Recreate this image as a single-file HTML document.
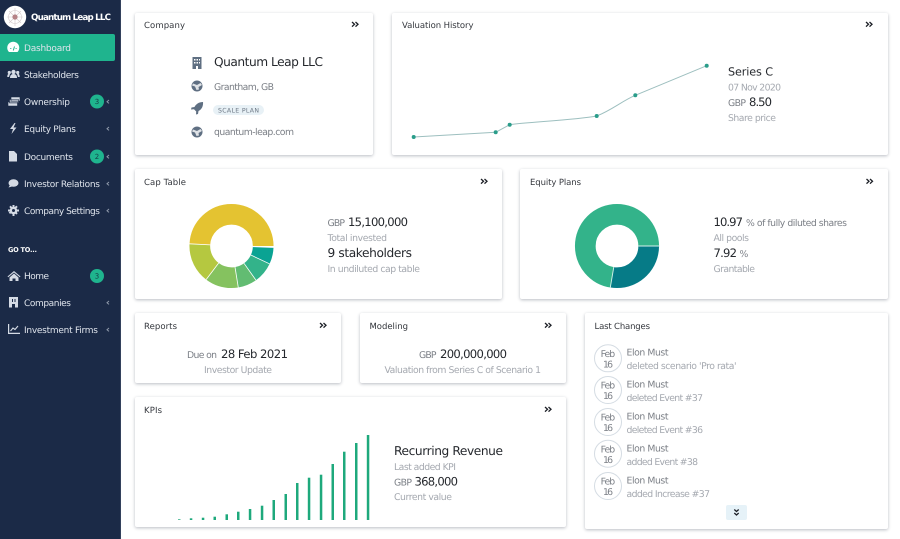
<!DOCTYPE html>
<html><head><meta charset="utf-8"><title>Dashboard</title>
<style>
html,body{margin:0;padding:0;width:900px;height:539px;overflow:hidden;background:#fff}
.side{position:absolute;left:0;top:0;width:120px;height:539px;background:#1b2a47;border-right:1px solid #33415c}
.act{position:absolute;left:0;top:34px;width:115px;height:27px;background:#1fb48e;border-radius:0 2px 2px 0}
.c{position:absolute;background:#fff;border-radius:2px;box-shadow:0 1px 3px rgba(40,50,70,.32)}
svg{position:absolute;left:0;top:0}
text{font-family:"DejaVu Sans","Liberation Sans",sans-serif;font-size:9.3px;fill:#7b7f86;text-rendering:geometricPrecision}
.s text{fill:#dfe4ec;font-size:9px}
.t{font-size:8.5px;fill:#33363c}
.l{fill:#a5a9b0}
.d{fill:#7b7f86}
.b{fill:#25282d;font-size:11.6px}
.big{font-size:12.2px;fill:#25282d}
.ic{fill:#5f6f82}
.si{fill:#d5dbe5}
.ch{fill:none;stroke:#dfe4ec;stroke-width:1}
.dc{fill:none;stroke:#1c1f26;stroke-width:1.3}
</style></head><body>
<div class="side"></div><div class="act"></div>
<div class="c" style="left:135px;top:13px;width:238px;height:142px"></div>
<div class="c" style="left:392px;top:13px;width:496px;height:142px"></div>
<div class="c" style="left:135px;top:169px;width:367px;height:130px"></div>
<div class="c" style="left:520px;top:169px;width:368px;height:130px"></div>
<div class="c" style="left:135px;top:313px;width:206px;height:70px"></div>
<div class="c" style="left:360px;top:313px;width:206px;height:70px"></div>
<div class="c" style="left:135px;top:397px;width:431px;height:130px"></div>
<div class="c" style="left:585px;top:313px;width:303px;height:216px"></div>

<svg width="900" height="539" viewBox="0 0 900 539">
<!-- logo -->
<circle cx="15" cy="17" r="11.2" fill="#fff"/>
<g stroke="#d3c9cb" stroke-width=".6" fill="none"><path d="M15 8v18M7 17h16M9 11l12 12M21 11L9 23"/><circle cx="15" cy="17" r="6.5"/></g>
<circle cx="15" cy="17" r="2.6" fill="#b58387"/>

<g class="s">
<text x="31" y="20" textLength="80" style="font-weight:bold;font-size:8.7px;fill:#fff">Quantum Leap LLC</text>
<text x="24" y="51" textLength="47">Dashboard</text>
<text x="24" y="78" textLength="55">Stakeholders</text>
<text x="24" y="105" textLength="46">Ownership</text>
<text x="24" y="132" textLength="52">Equity Plans</text>
<text x="24" y="160" textLength="49">Documents</text>
<text x="24" y="187" textLength="76">Investor Relations</text>
<text x="24" y="214" textLength="76">Company Settings</text>
<text x="8" y="252" textLength="29" style="font-weight:bold;font-size:6.6px;fill:#fff">GO TO...</text>
<text x="24" y="279" textLength="25">Home</text>
<text x="24" y="306" textLength="47">Companies</text>
<text x="24" y="333" textLength="74">Investment Firms</text>
</g>

<!-- badges -->
<g fill="#1fb48e"><circle cx="97" cy="101.5" r="7"/><circle cx="97" cy="156.5" r="7"/><circle cx="97" cy="276" r="7"/></g>
<g text-anchor="middle"><text x="97" y="104" style="font-size:7px;fill:#14424a">3</text><text x="97" y="159" style="font-size:7px;fill:#14424a">2</text><text x="97" y="278.5" style="font-size:7px;fill:#14424a">3</text></g>
<!-- chevrons -->
<g class="ch" style="stroke:#8f99aa">
<path d="M109 100l-2 1.7 2 1.7M109 127l-2 1.700 2 1.700M109 155l-2 1.700 2 1.700M109 182l-2 1.700 2 1.700M109 209l-2 1.700 2 1.700M109 301l-2 1.700 2 1.700M109 328l-2 1.700 2 1.700"/>
</g>

<!-- sidebar icons -->
<path fill="#fff" d="M9 52A6 6 0 1 1 17.5 52z"/><path d="M13.3 50.500l1.200-4M10.300 48.500h1M15.600 48.500h1" stroke="#1fb48e" stroke-width="1"/>
<g class="si">
<circle cx="13.500" cy="72" r="2.200"/><path d="M10 78c0-3 1.500-4 3.500-4s3.500 1 3.500 4z"/><circle cx="9.300" cy="72.500" r="1.600"/><circle cx="17.700" cy="72.500" r="1.600"/><path d="M7.300 77c0-2.500.8-3.200 2.200-3.200l.5.200-1 3zM19.700 77c0-2.500-.8-3.200-2.200-3.200l-.5.200 1 3z"/>
<path d="M11 97h9v4h-9zM9.500 99.500h9v3.500h-9zM8 102h9.500v4H8z" stroke="#1b2a47" stroke-width=".6"/>
<path d="M14.500 123l-4.500 6h3l-1.500 5 5-6.500h-3l2-4.500z"/>
<path d="M9 151h5l3 3v7.500H9z"/>
<ellipse cx="13.500" cy="183" rx="5" ry="3.800"/><path d="M10 185l-1.500 2.500 3.500-1z"/>
<path d="M12.500 205h2v11h-2zM8 209.500h11v2H8zM9.300 207l1.400-1.400 7 7.600-1.400 1.400zM16.300 205.600l1.400 1.400-7.600 7-1.400-1.400z"/>
<circle cx="13.500" cy="210.500" r="3.800"/>
<path d="M14 271l-6.500 5.500.7.800L14 272.500l5.800 4.800.7-.8zM9.500 277.500L14 273.500l4.500 4v3.500h-3v-2.500h-3v2.500h-3z"/>
<path d="M9 297h9v10.500H9z"/>
<path d="M8 324v10h12v-1.200H9.200V324z"/>
</g>
<circle cx="13.500" cy="210.500" r="1.500" fill="#1b2a47"/>
<path d="M10.500 331l2.500-3 2 1.500 3-3.500" fill="none" stroke="#d5dbe5" stroke-width="1.100"/>
<path d="M12 299h1v3h-1zM14.500 299h1v3h-1zM12 304h3v3.500h-3z" fill="#1b2a47"/>

<!-- titles -->
<text class="t" x="144" y="28" textLength="41">Company</text>
<text class="t" x="402" y="28" textLength="71.500">Valuation History</text>
<text class="t" x="144" y="185" textLength="42">Cap Table</text>
<text class="t" x="530" y="185" textLength="51">Equity Plans</text>
<text class="t" x="144" y="329" textLength="33">Reports</text>
<text class="t" x="369.500" y="329" textLength="38.500">Modeling</text>
<text class="t" x="594.500" y="329" textLength="55.500">Last Changes</text>
<text class="t" x="144" y="413" textLength="18">KPIs</text>

<!-- double chevrons -->
<g class="dc">
<path d="M352 22l2.500 2.300-2.500 2.300M355.500 22l2.500 2.300-2.500 2.300"/>
<path d="M866 22l2.500 2.300-2.500 2.300M869.500 22l2.500 2.300-2.500 2.300"/>
<path d="M481 179l2.500 2.300-2.500 2.300M484.500 179l2.500 2.300-2.500 2.300"/>
<path d="M866.500 179l2.500 2.300-2.500 2.300M870 179l2.500 2.300-2.500 2.300"/>
<path d="M320 323l2.500 2.300-2.500 2.300M323.500 323l2.500 2.300-2.500 2.300"/>
<path d="M545 323l2.500 2.300-2.500 2.300M548.500 323l2.500 2.300-2.500 2.300"/>
<path d="M545 407l2.500 2.300-2.500 2.300M548.500 407l2.500 2.300-2.500 2.300"/>
</g>

<!-- company -->
<path class="ic" d="M192.500 57h9v12h-9z"/><path d="M194 59h1.500v1.500H194zM196.500 59H198v1.500h-1.500zM199 59h1v1.500h-1zM194 62h1.500v1.500H194zM196.500 62H198v1.500h-1.500zM199 62h1v1.500h-1zM196 66h2v3h-2z" fill="#fff"/>
<circle class="ic" cx="197" cy="86" r="5.500"/><path d="M193 83.500l4 1.500 3.500-2 1.500 2-3.500 2 .5 2.500-2.500.5-1.500-3.500-3-1z" fill="#fff" opacity=".8"/>
<path class="ic" d="M203 102c-4 0-7 2-8.500 5l-3 .5-.5 2 3-.2 2.200 2.200-.2 3 2-.5.500-3c3-1.500 5-4.500 4.500-9.500z"/>
<circle class="ic" cx="197" cy="132" r="5.500"/><path d="M193 129.500l4 1.500 3.500-2 1.500 2-3.500 2 .5 2.500-2.500.5-1.500-3.500-3-1z" fill="#fff" opacity=".8"/>
<text class="big" x="214" y="66" textLength="109">Quantum Leap LLC</text>
<text class="d" x="214" y="90" textLength="60">Grantham, GB</text>
<rect x="213" y="105" width="51" height="10" rx="5" fill="#e8f1f6"/>
<text x="218" y="112.500" textLength="41" style="font-size:6.200px;fill:#6d7885">SCALE PLAN</text>
<text class="d" x="214" y="135" textLength="80">quantum-leap.com</text>

<!-- valuation -->
<path d="M413.700 137L495.700 132.300 509.700 124.700C530 122 575 120 596.700 116C612 110 622 101 635.300 95.300L706.700 65.700" fill="none" stroke="#9dbfbf" stroke-width="1"/>
<g fill="#2a9d8a"><circle cx="413.700" cy="137" r="2"/><circle cx="495.700" cy="132.300" r="2"/><circle cx="509.700" cy="124.700" r="2"/><circle cx="596.700" cy="116" r="2"/><circle cx="635.300" cy="95.300" r="2"/><circle cx="706.700" cy="65.700" r="2"/></g>
<text x="728" y="75.500" textLength="45" style="font-size:11.200px;fill:#25282d">Series C</text>
<text class="l" x="728" y="90.500" textLength="53">07 Nov 2020</text>
<text class="d" x="728" y="106" textLength="18">GBP</text>
<text class="b" x="749" y="106" textLength="23">8.50</text>
<text class="l" x="728" y="121" textLength="48">Share price</text>

<!-- cap donut -->
<g fill="none" stroke-width="20.700">
<circle cx="231.500" cy="246" r="31.700" pathLength="360" stroke="#e4c331" stroke-dasharray="178 360" stroke-dashoffset="-183"/>
<circle cx="231.500" cy="246" r="31.700" pathLength="360" stroke="#0aa393" stroke-dasharray="23 360" stroke-dashoffset="-2"/>
<circle cx="231.500" cy="246" r="31.700" pathLength="360" stroke="#33b38a" stroke-dasharray="29.400 360" stroke-dashoffset="-25"/>
<circle cx="231.500" cy="246" r="31.700" pathLength="360" stroke="#62bc72" stroke-dasharray="26.300 360" stroke-dashoffset="-54.400"/>
<circle cx="231.500" cy="246" r="31.700" pathLength="360" stroke="#85c25f" stroke-dasharray="46.300 360" stroke-dashoffset="-80.700"/>
<circle cx="231.500" cy="246" r="31.700" pathLength="360" stroke="#b5c840" stroke-dasharray="56 360" stroke-dashoffset="-127"/>
</g>
<g stroke="#fff" stroke-width=".8">
<path d="M252.800 246.700L273.500 247.500M250.800 255L269.500 263.800M244 263.300L256 280.200M235 267L238.300 287.600M218.700 263L206.200 279.500M210.300 244.900L189.500 243.800"/>
</g>
<text class="d" x="327.500" y="226" textLength="17.500">GBP</text>
<text class="b" x="348" y="226" textLength="60">15,100,000</text>
<text class="l" x="327.500" y="241" textLength="59.500">Total invested</text>
<text class="big" x="327.500" y="257" textLength="84.500">9 stakeholders</text>
<text class="l" x="327.500" y="272" textLength="92.500">In undiluted cap table</text>

<!-- equity donut -->
<g fill="none" stroke-width="20.700">
<circle cx="617" cy="246" r="31.700" pathLength="360" stroke="#33b38a" stroke-dasharray="261 360" stroke-dashoffset="-99"/>
<circle cx="617" cy="246" r="31.700" pathLength="360" stroke="#067b87" stroke-dasharray="99 360"/>
</g>
<g stroke="#d6f2ea" stroke-width=".9"><path d="M638.300 246H659.500M613.800 267L610.200 288"/></g>
<text class="b" x="713.500" y="226" textLength="29.500">10.97</text>
<text class="d" x="746" y="226" textLength="101">% of fully diluted shares</text>
<text class="l" x="713.500" y="241" textLength="35.500">All pools</text>
<text class="b" x="713.500" y="257" textLength="23.500">7.92</text>
<text class="d" x="739.500" y="257" textLength="7">%</text>
<text class="l" x="713.500" y="272" textLength="41.500">Grantable</text>

<!-- reports -->
<text class="d" x="187" y="358" textLength="30">Due on</text>
<text class="b" x="221" y="358" textLength="67">28 Feb 2021</text>
<text class="l" x="204" y="373" textLength="68">Investor Update</text>

<!-- modeling -->
<text class="d" x="419" y="358" textLength="17.500">GBP</text>
<text class="b" x="440" y="358" textLength="67">200,000,000</text>
<text class="l" x="384.500" y="373" textLength="156.500">Valuation from Series C of Scenario 1</text>

<!-- kpis -->
<g fill="#1ea97c">
<rect x="178" y="519.300" width="2.500" height=".7"/><rect x="189.800" y="518.300" width="2.500" height="1.700"/><rect x="201.800" y="517.700" width="2.500" height="2.300"/><rect x="213.500" y="516.700" width="2.500" height="3.300"/><rect x="225.500" y="514.300" width="2.500" height="5.700"/><rect x="237" y="511.700" width="2.500" height="8.300"/><rect x="248.800" y="509" width="2.500" height="11"/><rect x="260.800" y="505.700" width="2.500" height="14.300"/><rect x="272.500" y="500" width="2.500" height="20"/><rect x="284.500" y="494" width="2.500" height="26"/><rect x="296" y="483" width="2.500" height="37"/><rect x="307.800" y="477.700" width="2.500" height="42.300"/><rect x="319.800" y="474.700" width="2.500" height="45.300"/><rect x="331.500" y="464" width="2.500" height="56"/><rect x="343" y="451.700" width="2.500" height="68.300"/><rect x="355" y="443" width="2.500" height="77"/><rect x="366.800" y="435" width="2.500" height="85"/>
</g>
<text class="big" x="394" y="455" textLength="109">Recurring Revenue</text>
<text class="l" x="394" y="470" textLength="62">Last added KPI</text>
<text class="d" x="394" y="485.500" textLength="18">GBP</text>
<text class="b" x="414.500" y="485.500" textLength="43.500">368,000</text>
<text class="l" x="394" y="500" textLength="58">Current value</text>

<!-- last changes -->
<g fill="#fff" stroke="#d5dce3" stroke-width="1">
<circle cx="608" cy="358.300" r="13.500"/><circle cx="608" cy="390" r="13.500"/><circle cx="608" cy="422" r="13.500"/><circle cx="608" cy="453.700" r="13.500"/><circle cx="608" cy="486" r="13.500"/>
</g>
<g style="font-size:9px">
<text class="d" x="600.600" y="357" textLength="14.500">Feb</text><text class="d" x="603" y="367.500" textLength="10">16</text>
<text class="d" x="600.600" y="388.700" textLength="14.500">Feb</text><text class="d" x="603" y="399.200" textLength="10">16</text>
<text class="d" x="600.600" y="420.700" textLength="14.500">Feb</text><text class="d" x="603" y="431.200" textLength="10">16</text>
<text class="d" x="600.600" y="452.400" textLength="14.500">Feb</text><text class="d" x="603" y="462.900" textLength="10">16</text>
<text class="d" x="600.600" y="484.700" textLength="14.500">Feb</text><text class="d" x="603" y="495.200" textLength="10">16</text>
</g>
<text class="d" x="626.500" y="355.500" textLength="42">Elon Must</text>
<text class="l" x="626.500" y="369" textLength="110">deleted scenario 'Pro rata'</text>
<text class="d" x="626.500" y="387.500" textLength="42">Elon Must</text>
<text class="l" x="626.500" y="401" textLength="76.500">deleted Event #37</text>
<text class="d" x="626.500" y="419.500" textLength="42">Elon Must</text>
<text class="l" x="626.500" y="433" textLength="76.500">deleted Event #36</text>
<text class="d" x="626.500" y="451.500" textLength="42">Elon Must</text>
<text class="l" x="626.500" y="465" textLength="71.500">added Event #38</text>
<text class="d" x="626.500" y="483.500" textLength="42">Elon Must</text>
<text class="l" x="626.500" y="497" textLength="83.500">added Increase #37</text>
<rect x="726" y="505" width="21" height="15" rx="2" fill="#e6f2f8"/>
<path class="dc" d="M734.300 509.500l2.200 2 2.200-2M734.300 513l2.200 2 2.200-2"/>
</svg>
</body></html>
